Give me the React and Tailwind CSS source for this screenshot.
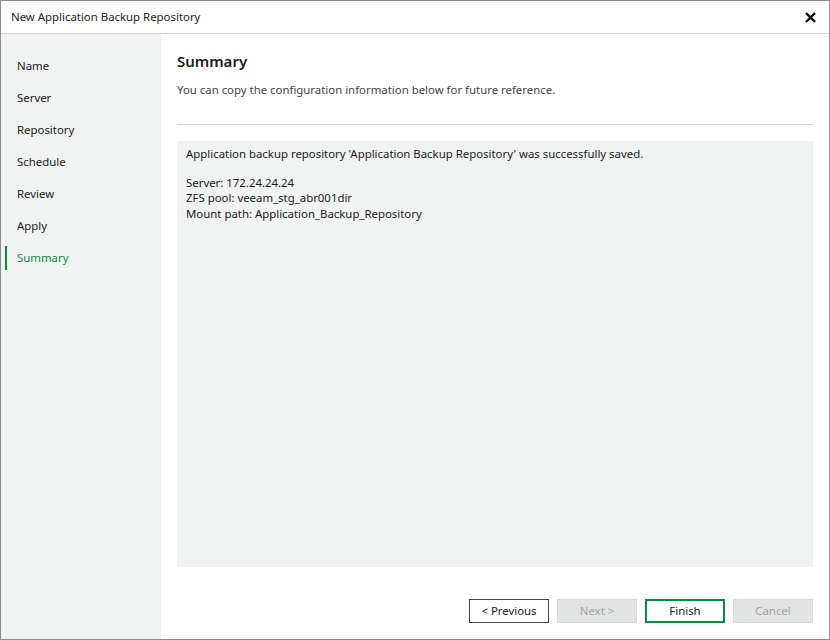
export default function App() {
  const steps = ["Name", "Server", "Repository", "Schedule", "Review", "Apply", "Summary"];
  return (
    <div className="w-[830px] h-[640px] bg-white border border-[#8c8c8c] flex flex-col text-[11.4px] text-[#1a1a1a] overflow-hidden font-['Noto_Sans',sans-serif]">
      <div className="h-[33px] flex items-center justify-between pl-[10px] pr-[10px] border-b border-[#d4d4d4] shrink-0">
        <span className="text-[11.4px] text-[#222]">New Application Backup Repository</span>
        <svg width="11" height="11" viewBox="0 0 12 12" className="mr-[3px]">
          <path d="M2 2 L10 10 M10 2 L2 10" stroke="#111" strokeWidth="2.6" strokeLinecap="square" />
        </svg>
      </div>
      <div className="flex flex-1 min-h-0">
        <div className="w-[160px] bg-[#f1f3f2] pt-[20px] shrink-0">
          {steps.map((s) => (
            <div key={s} className="h-[24px] mb-[8px] flex items-center relative">
              {s === "Summary" && <div className="absolute left-[4px] top-0 bottom-0 w-[2px] bg-[#0b8a3f]" />}
              <span className={"pl-[16px] " + (s === "Summary" ? "text-[#0b8a3f]" : "text-[#1a1a1a]")}>{s}</span>
            </div>
          ))}
        </div>
        <div className="flex-1 flex flex-col px-[16px] pb-[16px]">
          <div className="pt-[17px] text-[15px] font-semibold leading-[20px] text-[#1a1a1a]">Summary</div>
          <div className="mt-[11px] leading-[16px] text-[#444]">You can copy the configuration information below for future reference.</div>
          <div className="mt-[26px] h-px bg-[#d6d6d6]" />
          <div className="mt-[16px] flex-1 bg-[#f1f3f2] pl-[9px] pt-[5px] leading-[15.5px] text-[#1a1a1a]">
            <div>Application backup repository 'Application Backup Repository' was successfully saved.</div>
            <div className="h-[13px]" />
            <div>Server: 172.24.24.24</div>
            <div>ZFS pool: veeam_stg_abr001dir</div>
            <div>Mount path: Application_Backup_Repository</div>
          </div>
          <div className="mt-[32px] flex justify-end gap-[8px]">
            <button className="w-[80px] h-[24px] border border-[#444] bg-white text-[#1a1a1a] text-[11.4px]">&lt; Previous</button>
            <button className="w-[80px] h-[24px] border border-[#d9dbdb] bg-[#e2e4e4] text-[#a3a3a3] text-[11.4px]">Next &gt;</button>
            <button className="w-[80px] h-[24px] border-2 border-[#0b8a3f] bg-white text-[#1a1a1a] text-[11.4px]">Finish</button>
            <button className="w-[80px] h-[24px] border border-[#d9dbdb] bg-[#e2e4e4] text-[#a3a3a3] text-[11.4px]">Cancel</button>
          </div>
        </div>
      </div>
    </div>
  );
}
